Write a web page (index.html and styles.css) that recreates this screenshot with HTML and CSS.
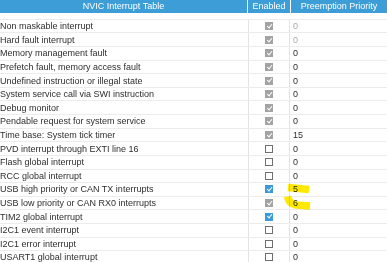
FILE: index.html
```html
<!DOCTYPE html>
<html lang="en">
<head>
<meta charset="UTF-8" />
<title>NVIC Interrupt Table</title>
<link rel="stylesheet" href="styles.css">
</head>
<body>

<div class="nvic">
  <div class="nvic-head">
    <div class="hcell">NVIC Interrupt Table</div>
    <div class="hcell">Enabled</div>
    <div class="hcell">Preemption Priority</div>
  </div>
  <div class="nvic-gap"></div>

  <div class="row"><div class="name">Non maskable interrupt</div><div class="en"><span class="cb locked"></span></div><div class="prio off">0</div></div>
  <div class="row"><div class="name">Hard fault interrupt</div><div class="en"><span class="cb locked"></span></div><div class="prio off">0</div></div>
  <div class="row"><div class="name">Memory management fault</div><div class="en"><span class="cb locked"></span></div><div class="prio">0</div></div>
  <div class="row"><div class="name">Prefetch fault, memory access fault</div><div class="en"><span class="cb locked"></span></div><div class="prio">0</div></div>
  <div class="row"><div class="name">Undefined instruction or illegal state</div><div class="en"><span class="cb locked"></span></div><div class="prio">0</div></div>
  <div class="row"><div class="name">System service call via SWI instruction</div><div class="en"><span class="cb locked"></span></div><div class="prio">0</div></div>
  <div class="row"><div class="name">Debug monitor</div><div class="en"><span class="cb locked"></span></div><div class="prio">0</div></div>
  <div class="row"><div class="name">Pendable request for system service</div><div class="en"><span class="cb locked"></span></div><div class="prio">0</div></div>
  <div class="row"><div class="name">Time base: System tick timer</div><div class="en"><span class="cb locked"></span></div><div class="prio">15</div></div>
  <div class="row"><div class="name">PVD interrupt through EXTI line 16</div><div class="en"><span class="cb"></span></div><div class="prio">0</div></div>
  <div class="row"><div class="name">Flash global interrupt</div><div class="en"><span class="cb"></span></div><div class="prio">0</div></div>
  <div class="row"><div class="name">RCC global interrupt</div><div class="en"><span class="cb"></span></div><div class="prio">0</div></div>
  <div class="row"><div class="name">USB high priority or CAN TX interrupts</div><div class="en"><span class="cb on"></span></div><div class="prio">5</div></div>
  <div class="row"><div class="name">USB low priority or CAN RX0 interrupts</div><div class="en"><span class="cb locked"></span></div><div class="prio">6</div></div>
  <div class="row"><div class="name">TIM2 global interrupt</div><div class="en"><span class="cb on"></span></div><div class="prio">0</div></div>
  <div class="row"><div class="name">I2C1 event interrupt</div><div class="en"><span class="cb"></span></div><div class="prio">0</div></div>
  <div class="row"><div class="name">I2C1 error interrupt</div><div class="en"><span class="cb"></span></div><div class="prio">0</div></div>
  <div class="row"><div class="name">USART1 global interrupt</div><div class="en"><span class="cb"></span></div><div class="prio">0</div></div>
</div>

<!-- surlignage jaune fait a la main -->
<svg class="marks" viewBox="0 0 387 262" aria-hidden="true">
  <path d="M288 187.5 L309 189.5" />
  <path d="M287.5 196.5 Q289 204 296 205 L310 206" />
</svg>

</body>
</html>
```

FILE: styles.css
```css
body {
  margin: 0;
  background: #fff;
  font-family: "Liberation Sans", Arial, sans-serif;
  font-size: 9px;
  color: #2e2e2e;
  overflow: hidden;
}
.nvic {
  width: 387px;
}
/* entete bleue */
.nvic-head {
  display: grid;
  grid-template-columns: 247px 42px 1fr;
  column-gap: 1px;
  background: #fff;
  height: 13px;
}
.hcell {
  background: #3d9dd6;
  color: #fff;
  text-align: center;
  line-height: 13px;
  white-space: nowrap;
  overflow: hidden;
}
.nvic-gap {
  height: 6.8px;
  border-bottom: 1px solid #ececec;
  box-sizing: border-box;
}
/* lignes du tableau */
.row {
  display: grid;
  grid-template-columns: 248px 42px 1fr;
  height: 13.62px;
  border-bottom: 1px solid #ececec;
  box-sizing: border-box;
  align-items: center;
}
.name {
  white-space: nowrap;
  overflow: hidden;
}
.en {
  border-left: 1px solid #e4e4e4;
  border-right: 1px solid #e4e4e4;
  height: 100%;
  display: flex;
  align-items: center;
  justify-content: center;
}
.prio {
  padding-left: 3px;
}
.prio.off {
  color: #aaa;
}
/* cases a cocher */
.cb {
  width: 8px;
  height: 8px;
  box-sizing: border-box;
  border: 1px solid #6f6f6f;
  background: #fff;
  position: relative;
}
.cb.locked,
.cb.on {
  border: none;
  background: #a3a3a3;
}
.cb.on {
  background: #3c9ad8;
}
.cb.locked::after,
.cb.on::after {
  content: "";
  position: absolute;
  left: 2.6px;
  top: 0.8px;
  width: 2px;
  height: 4.2px;
  border: solid #fff;
  border-width: 0 1.2px 1.2px 0;
  transform: rotate(40deg);
}
.marks {
  position: absolute;
  left: 0;
  top: 0;
  width: 387px;
  height: 262px;
  pointer-events: none;
  mix-blend-mode: multiply;
}
.marks path {
  fill: none;
  stroke: #ffe900;
  stroke-width: 7.5;
  stroke-linejoin: round;
}
```
